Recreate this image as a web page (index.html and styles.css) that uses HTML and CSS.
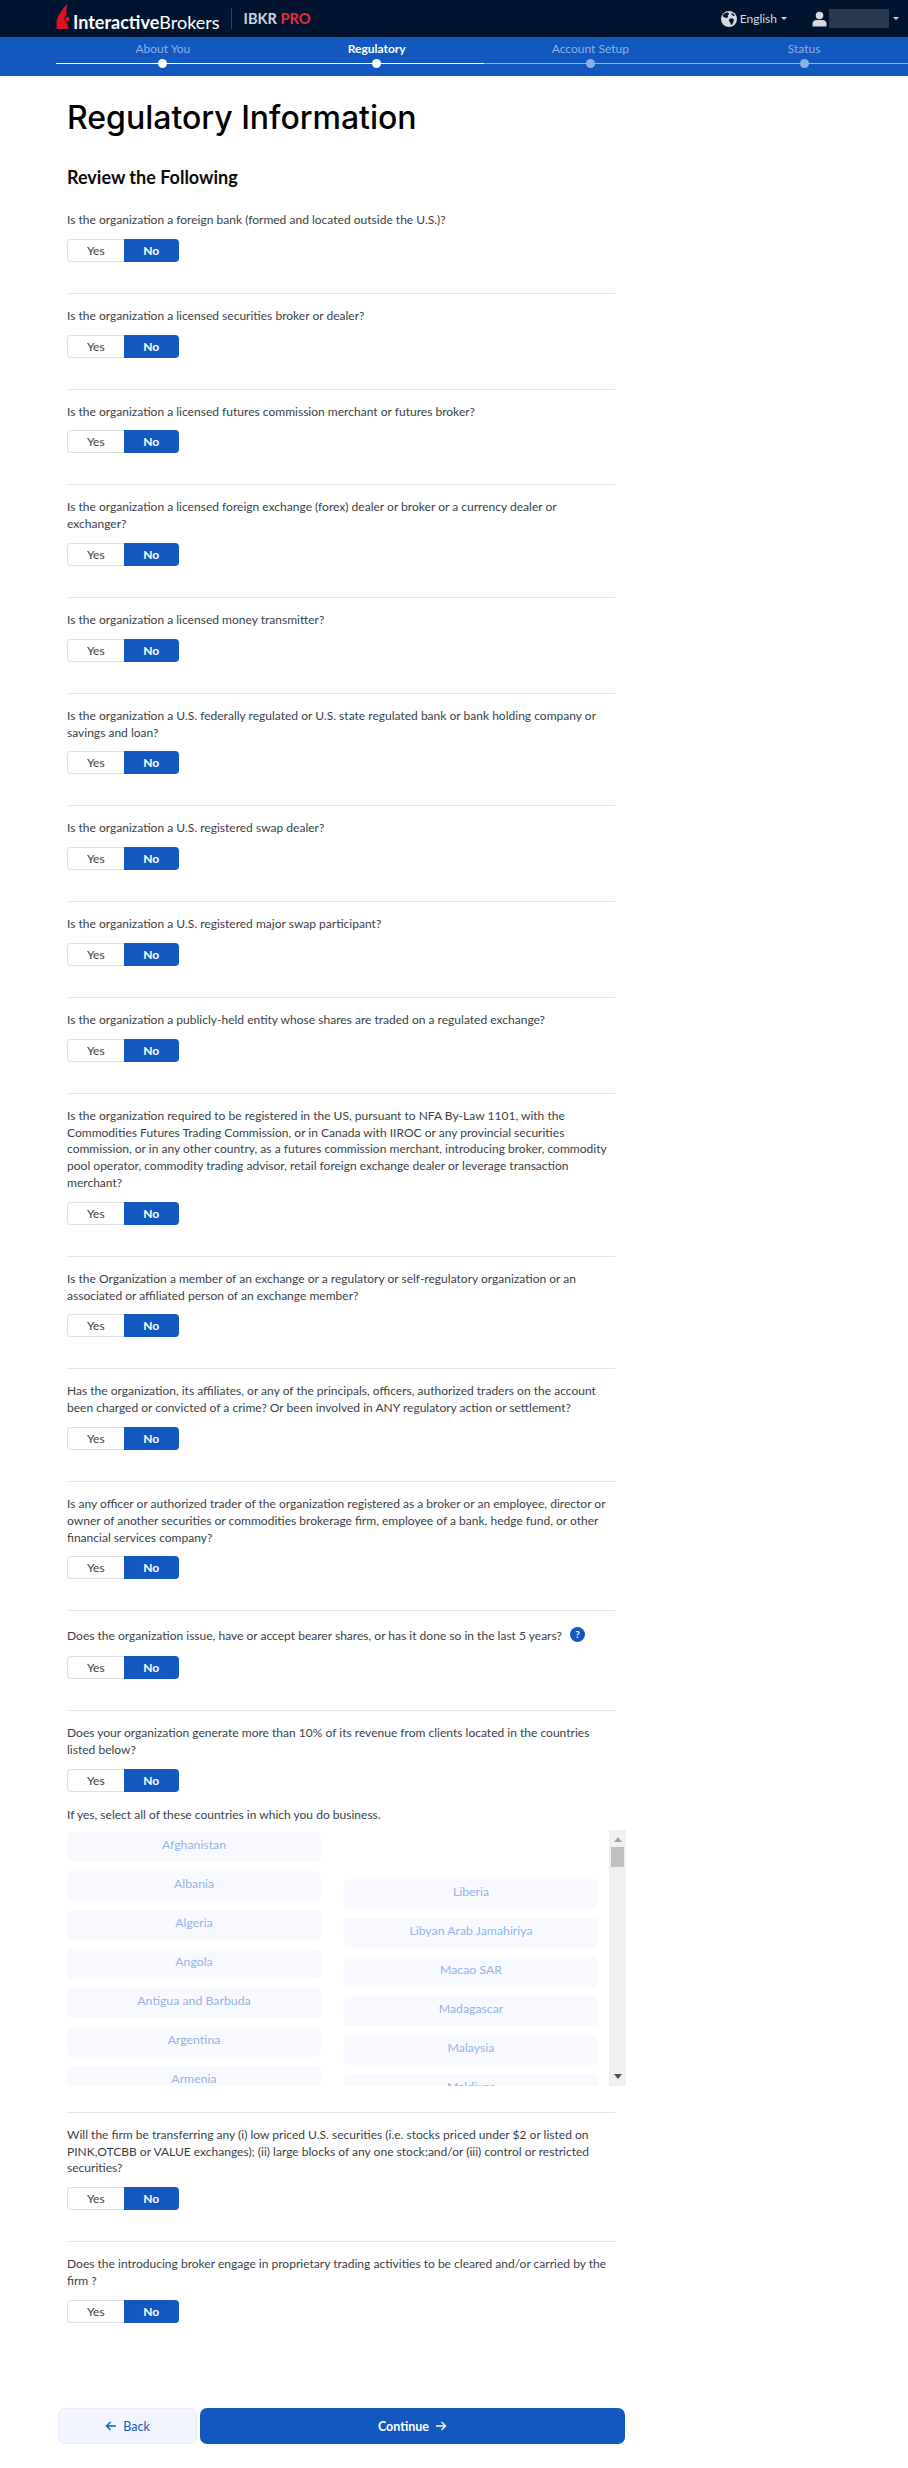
FILE: index.html
```html
<!DOCTYPE html>
<html lang="en">
<head>
<meta charset="utf-8">
<title>Regulatory Information</title>
<link rel="stylesheet" href="styles.css">
</head>
<body>
<header class="topbar">
  <div class="brand">
    <svg class="brand-mark" viewBox="0 0 14 26" aria-hidden="true"><path fill="#d81222" d="M11.5 0 L10.3 6.6 C10 8.6 10.6 10 11.4 11 C8.9 11.6 8 13.9 8.6 16 C9 17.4 10 18.3 11.2 18.7 L12.6 25 L0.6 25 L0.6 17 C2.2 10.8 6.3 4.6 11.5 0 Z"/><circle cx="11.5" cy="15" r="2.2" fill="#d81222"/></svg>
    <span class="brand-name"><b>Interactive</b>Brokers</span>
    <span class="brand-sep"></span>
    <span class="brand-pro">IBKR <em>PRO</em></span>
  </div>
  <div class="top-tools">
    <svg class="globe" viewBox="0 0 16 16" aria-hidden="true"><circle cx="8" cy="8" r="8" fill="#d6d9de"/><path fill="#001430" d="M3 2.6 L7 1.2 L8.2 3 L6.6 4.4 L7.2 6 L5.6 7 L3.6 6.4 L1.4 5 Z M8.8 7.4 L12 7.6 L13 9.4 L11.6 12.4 L10 14.2 L9.2 11.6 L7.8 9.6 Z M11 1.8 L14 4.4 L12.4 5 L10.4 3.6 Z"/></svg>
    <span class="lang">English</span><span class="caret"></span>
    <svg class="person" viewBox="0 0 16 16" aria-hidden="true"><circle cx="8" cy="4.2" r="4" fill="#d6d9de"/><path fill="#d6d9de" d="M0.6 16 V12.6 C0.6 10.4 2.6 9 4.6 9 H11.4 C13.4 9 15.4 10.4 15.4 12.6 V16 Z"/></svg>
    <span class="redacted"></span><span class="caret caret-user"></span>
  </div>
</header>
<nav class="steps">
  <div class="step done"><span class="step-label">About You</span></div>
  <div class="step current"><span class="step-label">Regulatory</span></div>
  <div class="step"><span class="step-label">Account Setup</span></div>
  <div class="step"><span class="step-label">Status</span></div>
</nav>
<main class="page">
  <h1 class="title">Regulatory Information</h1>
  <h2 class="subtitle">Review the Following</h2>

  <section class="question"><p>Is the organization a foreign bank (formed and located outside the U.S.)?</p><div class="toggle"><button class="opt">Yes</button><button class="opt on">No</button></div></section>
  <section class="question"><p>Is the organization a licensed securities broker or dealer?</p><div class="toggle"><button class="opt">Yes</button><button class="opt on">No</button></div></section>
  <section class="question"><p>Is the organization a licensed futures commission merchant or futures broker?</p><div class="toggle"><button class="opt">Yes</button><button class="opt on">No</button></div></section>
  <section class="question"><p>Is the organization a licensed foreign exchange (forex) dealer or broker or a currency dealer or exchanger?</p><div class="toggle"><button class="opt">Yes</button><button class="opt on">No</button></div></section>
  <section class="question"><p>Is the organization a licensed money transmitter?</p><div class="toggle"><button class="opt">Yes</button><button class="opt on">No</button></div></section>
  <section class="question"><p>Is the organization a U.S. federally regulated or U.S. state regulated bank or bank holding company or savings and loan?</p><div class="toggle"><button class="opt">Yes</button><button class="opt on">No</button></div></section>
  <section class="question"><p>Is the organization a U.S. registered swap dealer?</p><div class="toggle"><button class="opt">Yes</button><button class="opt on">No</button></div></section>
  <section class="question"><p>Is the organization a U.S. registered major swap participant?</p><div class="toggle"><button class="opt">Yes</button><button class="opt on">No</button></div></section>
  <section class="question"><p>Is the organization a publicly-held entity whose shares are traded on a regulated exchange?</p><div class="toggle"><button class="opt">Yes</button><button class="opt on">No</button></div></section>
  <section class="question"><p>Is the organization required to be registered in the US, pursuant to NFA By-Law 1101, with the Commodities Futures Trading Commission, or in Canada with IIROC or any provincial securities commission, or in any other country, as a futures commission merchant, introducing broker, commodity pool operator, commodity trading advisor, retail foreign exchange dealer or leverage transaction merchant?</p><div class="toggle"><button class="opt">Yes</button><button class="opt on">No</button></div></section>
  <section class="question"><p>Is the Organization a member of an exchange or a regulatory or self-regulatory organization or an associated or affiliated person of an exchange member?</p><div class="toggle"><button class="opt">Yes</button><button class="opt on">No</button></div></section>
  <section class="question"><p>Has the organization, its affiliates, or any of the principals, officers, authorized traders on the account been charged or convicted of a crime? Or been involved in ANY regulatory action or settlement?</p><div class="toggle"><button class="opt">Yes</button><button class="opt on">No</button></div></section>
  <section class="question"><p>Is any officer or authorized trader of the organization registered as a broker or an employee, director or owner of another securities or commodities brokerage firm, employee of a bank, hedge fund, or other financial services company?</p><div class="toggle"><button class="opt">Yes</button><button class="opt on">No</button></div></section>
  <section class="question has-help"><p>Does the organization issue, have or accept bearer shares, or has it done so in the last 5 years? <span class="help">?</span></p><div class="toggle"><button class="opt">Yes</button><button class="opt on">No</button></div></section>
  <section class="question has-list"><p>Does your organization generate more than 10% of its revenue from clients located in the countries listed below?</p><div class="toggle"><button class="opt">Yes</button><button class="opt on">No</button></div>
    <p class="list-intro">If yes, select all of these countries in which you do business.</p>
    <div class="country-box">
      <div class="country-cols">
        <div class="country-col">
          <div class="country">Afghanistan</div>
          <div class="country">Albania</div>
          <div class="country">Algeria</div>
          <div class="country">Angola</div>
          <div class="country">Antigua and Barbuda</div>
          <div class="country">Argentina</div>
          <div class="country">Armenia</div>
        </div>
        <div class="country-col second">
          <div class="country">Liberia</div>
          <div class="country">Libyan Arab Jamahiriya</div>
          <div class="country">Macao SAR</div>
          <div class="country">Madagascar</div>
          <div class="country">Malaysia</div>
          <div class="country">Maldives</div>
        </div>
      </div>
      <div class="scrollbar"><span class="arrow up"></span><span class="thumb"></span><span class="arrow down"></span></div>
    </div>
  </section>
  <section class="question"><p>Will the firm be transferring any (i) low priced U.S. securities (i.e. stocks priced under $2 or listed on PINK,OTCBB or VALUE exchanges); (ii) large blocks of any one stock;and/or (iii) control or restricted securities?</p><div class="toggle"><button class="opt">Yes</button><button class="opt on">No</button></div></section>
  <section class="question last"><p>Does the introducing broker engage in proprietary trading activities to be cleared and/or carried by the firm ?</p><div class="toggle"><button class="opt">Yes</button><button class="opt on">No</button></div></section>
</main>
<footer class="actions">
  <button class="btn back"><svg viewBox="0 0 12 12" aria-hidden="true"><path d="M11 6 H1.5 M5.5 2 L1.5 6 L5.5 10" fill="none" stroke="currentColor" stroke-width="1.4"/></svg>Back</button>
  <button class="btn continue">Continue<svg viewBox="0 0 12 12" aria-hidden="true"><path d="M1 6 H10.5 M6.5 2 L10.5 6 L6.5 10" fill="none" stroke="currentColor" stroke-width="1.4"/></svg></button>
</footer>
</body>
</html>
```
FILE: styles.css
```css
* { box-sizing: border-box; }
html, body { margin: 0; padding: 0; background: #fff; }
body { font-family: "Lato", "Liberation Sans", sans-serif; color: #3a3f47; width: 908px; height: 2468px; overflow: hidden; position: relative; }

.topbar { height: 37px; background: #01142f; display: flex; align-items: center; justify-content: space-between; padding: 0 9px 0 56px; }
.brand { display: flex; align-items: center; }
.brand-mark { width: 14px; height: 26px; margin-right: 3px; margin-top: -3px; }
.brand-name { color: #fff; font-size: 18px; margin-top: 6px; }
.brand-name b { font-weight: 700; }
.brand-sep { width: 1px; height: 21px; background: #33435c; margin: 0 12px 0 11px; }
.brand-pro { color: #ced2d9; font-weight: 700; font-size: 14.6px; }
.brand-pro em { color: #e8293b; font-style: normal; }
.top-tools { display: flex; align-items: center; color: #d6d9de; font-size: 12px; }
.globe { width: 16px; height: 16px; margin-right: 3px; }
.lang { margin-right: 4px; }
.caret { width: 0; height: 0; border-left: 3px solid transparent; border-right: 3px solid transparent; border-top: 3px solid #d6d9de; }
.person { width: 15px; height: 16px; margin-left: 25px; margin-right: 2px; }
.redacted { width: 60px; height: 19px; background: #2a3950; }
.caret-user { margin-left: 4px; }

.steps { height: 39px; background: #1358bf; display: flex; padding-left: 56px; overflow: hidden; }
.step { flex: 0 0 213.75px; text-align: center; position: relative; color: #8fb0e6; font-size: 12px; padding-top: 4px; line-height: 16px; }
.step::before { content: ""; display: block; position: absolute; left: 0; right: 0; top: 26px; height: 1px; background: #8fb0e6; }
.step::after { content: ""; position: absolute; left: 50%; top: 22px; width: 9px; height: 9px; margin-left: -4.5px; border-radius: 50%; background: #8fb0e6; }
.step.done::before, .step.current::before { background: #fff; }
.step.done::after, .step.current::after { background: #fff; }
.step.current { color: #fff; font-weight: 700; }

.page { padding: 0 0 0 67px; width: 615px; }
.title { margin: 20px 0 0; font-family: "Inter", "Lato", sans-serif; font-size: 32px; line-height: 44px; font-weight: 500; color: #000; }
.subtitle { margin: 25px 0 0; font-size: 18px; line-height: 24px; font-weight: 700; color: #0a0a0a; }

.question { padding: 14px 0 31px; border-bottom: 1px solid #e2e4e8; }
.question p { margin: 0 0 10px; font-size: 12.04px; line-height: 16.8px; width: 548px; }
.subtitle + .question { padding-top: 23px; }
.has-help p { line-height: 22px; margin-bottom: 9px; }
.has-list { padding-bottom: 26px; }
.last { border-bottom: 0; }

.toggle { display: flex; width: 112px; height: 23px; }
.opt { flex: 1; border: 1px solid #dcdfe4; border-right: 0; border-radius: 4px 0 0 4px; background: #fff; color: #3a3f47; font: 12px/19px "Lato", sans-serif; padding: 0; }
.opt.on { background: #1358bf; border: 0; border-radius: 0 4px 4px 0; color: #fff; font-weight: 700; }

.help { display: inline-block; width: 15px; height: 15px; border-radius: 50%; background: #1358bf; color: #fff; font-size: 10px; font-weight: 700; line-height: 15px; text-align: center; vertical-align: 2px; margin-left: 5px; }

.question .list-intro { margin: 15px 0 6px; }
.country-box { display: flex; width: 559px; height: 256px; overflow: hidden; }
.country-cols { display: flex; gap: 23px; width: 542px; padding-top: 2px; align-items: flex-start; }
.country-col { width: 254px; display: flex; flex-direction: column; gap: 9px; flex: none; }
.country-col.second { margin-top: 47px; }
.country { height: 30px; flex: none; background: #f8f9fe; border-radius: 5px; color: #95b2e7; font-size: 12.3px; line-height: 16px; padding-top: 5px; text-align: center; }
.scrollbar { width: 17px; background: #f0f0f0; display: flex; flex-direction: column; align-items: center; flex: none; padding-top: 7px; }
.thumb { width: 13px; height: 20px; background: #c0c0c0; margin-top: 5px; }
.arrow { width: 0; height: 0; border-left: 4px solid transparent; border-right: 4px solid transparent; }
.arrow.up { border-bottom: 5px solid #a3a3a3; }
.arrow.down { border-top: 5px solid #505050; margin-top: auto; margin-bottom: 7px; }

.actions { position: absolute; left: 58px; top: 2408px; display: flex; gap: 3px; width: 567px; height: 36px; }
.btn { height: 36px; border-radius: 7px; font: 700 12.5px "Lato", sans-serif; display: flex; align-items: center; justify-content: center; gap: 6px; padding: 0; }
.btn svg { width: 12px; height: 12px; }
.back { width: 139px; background: #f2f5fd; border: 1px solid #e6ebf7; color: #1358bf; font-weight: 400; }
.continue { flex: 1; background: #1358bf; border: 0; color: #fff; }
```
